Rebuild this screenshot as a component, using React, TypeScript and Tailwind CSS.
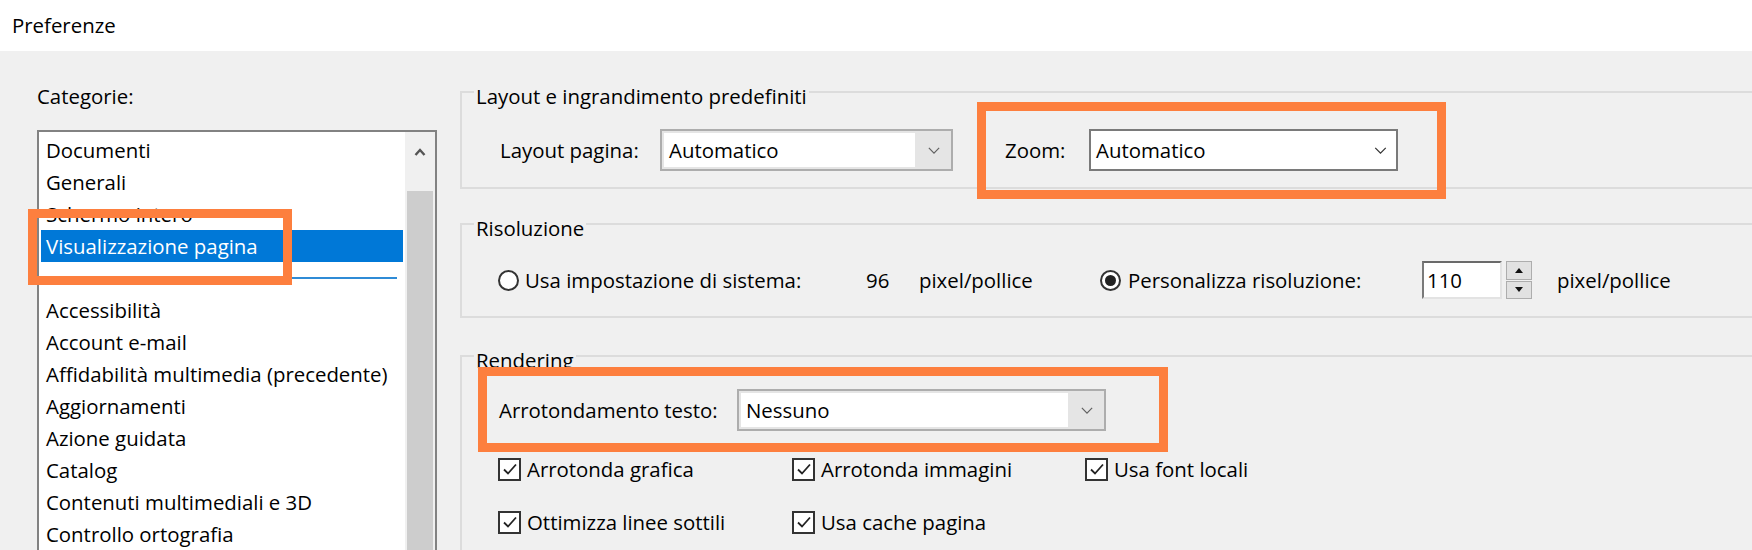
import type { ReactNode } from 'react';

const CATEGORIES_TOP = ['Documenti', 'Generali', 'Schermo intero', 'Visualizzazione pagina'];
const CATEGORIES = [
  'Accessibilità',
  'Account e-mail',
  'Affidabilità multimedia (precedente)',
  'Aggiornamenti',
  'Azione guidata',
  'Catalog',
  'Contenuti multimediali e 3D',
  'Controllo ortografia',
];

function Chevron({ className = '' }: { className?: string }) {
  return (
    <svg viewBox="0 0 14 8" className={className} fill="none" stroke="currentColor" strokeWidth={1.4}>
      <polyline points="1,1 7,7 13,1" />
    </svg>
  );
}

// annotation frame drawn over the screenshot
function Highlight({ className }: { className: string }) {
  return <div className={`pointer-events-none absolute border-[9px] border-[#fd7f3e] ${className}`} />;
}

function ReadonlyCombo({ value, className }: { value: string; className: string }) {
  return (
    <div className={`flex h-[42px] border-2 border-[#adadad] bg-[#e5e5e5] ${className}`}>
      <div className="m-[2px] flex flex-1 items-center bg-white pl-[5px]">{value}</div>
      <div className="flex w-[34px] items-center justify-center text-[#606060]">
        <Chevron className="h-[7px] w-[12px]" />
      </div>
    </div>
  );
}

function Radio({ checked = false }: { checked?: boolean }) {
  return (
    <span className="flex h-[21px] w-[21px] shrink-0 items-center justify-center rounded-full border-2 border-[#333] bg-white">
      {checked && <span className="h-[11px] w-[11px] rounded-full bg-[#222]" />}
    </span>
  );
}

function Checkbox({ label }: { label: string }) {
  return (
    <label className="flex items-center">
      <span className="flex h-[23px] w-[23px] shrink-0 items-center justify-center border-2 border-[#333] bg-white">
        <svg viewBox="0 0 16 16" className="h-[16px] w-[16px]" fill="none" stroke="#222" strokeWidth={1.8}>
          <polyline points="2,8.5 6,12.5 14,3.5" />
        </svg>
      </span>
      <span className="ml-[6px]">{label}</span>
    </label>
  );
}

function Group({ title, children, className = '' }: { title: string; children: ReactNode; className?: string }) {
  return (
    <fieldset className={`w-[1320px] border-2 border-[#dcdcdc] ${className}`}>
      <legend className="ml-[12px] px-[2px] pt-[8px] leading-[24px]">{title}</legend>
      {children}
    </fieldset>
  );
}

export default function App() {
  return (
    <div className="flex h-[550px] w-full flex-col overflow-hidden bg-[#f0f0f0] font-['Open_Sans','Noto_Sans',sans-serif] text-[20.4px] text-black">
      <div className="h-[51px] shrink-0 bg-white pl-[12px] leading-[51px]">Preferenze</div>

      <div className="flex min-h-0 flex-1">
        <div className="w-[460px] shrink-0 pl-[37px] pt-[30px]">
          <div className="leading-[30px]">Categorie:</div>
          <div className="relative mt-[19px] flex h-[440px] w-[400px] border-2 border-[#828282] bg-white">
            <ul className="flex-1 px-[2px] pt-[2px]">
              {CATEGORIES_TOP.map((c, i) => (
                <li
                  key={c}
                  className={`h-[32px] pl-[5px] leading-[32px] ${i === 3 ? 'bg-[#0078d7] text-white' : ''}`}
                >
                  {c}
                </li>
              ))}
              <li className="flex h-[32px] items-center pl-[5px] pr-[6px]">
                <div className="h-[2px] w-full bg-[#2f8bd6]" />
              </li>
              {CATEGORIES.map((c) => (
                <li key={c} className="h-[32px] pl-[5px] leading-[32px]">
                  {c}
                </li>
              ))}
            </ul>
            <div className="flex w-[30px] flex-col bg-[#f0f0f0] pt-[3px]">
              <div className="flex h-[34px] items-center justify-center text-[#555]">
                <svg viewBox="0 0 12 8" className="h-[8px] w-[12px]" fill="none" stroke="currentColor" strokeWidth={2.4}>
                  <polyline points="1.5,7 6,2 10.5,7" />
                </svg>
              </div>
              <div className="h-[22px]" />
              <div className="mx-[2px] flex-1 bg-[#cdcdcd]" />
            </div>
            <Highlight className="-left-[11px] top-[77px] h-[76px] w-[264px]" />
          </div>
        </div>

        <div className="flex-1">
          <Group title="Layout e ingrandimento predefiniti" className="mt-[25px]">
            <div className="flex items-center pb-[16px] pl-[38px] pt-[21px]">
              <span className="w-[160px] shrink-0">Layout pagina:</span>
              <ReadonlyCombo value="Automatico" className="w-[293px]" />
              <div className="relative ml-[52px] flex items-center">
                <span className="w-[84px] shrink-0">Zoom:</span>
                <div className="flex h-[42px] w-[309px] items-center justify-between border-2 border-[#7a7a7a] bg-white pl-[5px] pr-[9px]">
                  <span>Automatico</span>
                  <Chevron className="h-[7px] w-[13px] text-[#333]" />
                </div>
                <Highlight className="-bottom-[28px] -left-[28px] -right-[48px] -top-[27px]" />
              </div>
            </div>
          </Group>

          <Group title="Risoluzione" className="mt-[19px]">
            <div className="mb-[17px] mt-[21px] flex h-[38px] items-center pl-[36px]">
              <Radio />
              <span className="ml-[6px] w-[341px] shrink-0">Usa impostazione di sistema:</span>
              <span className="w-[53px] shrink-0">96</span>
              <span className="w-[181px] shrink-0">pixel/pollice</span>
              <Radio checked />
              <span className="ml-[7px] w-[294px] shrink-0">Personalizza risoluzione:</span>
              <div className="flex h-[38px] w-[80px] items-center border-2 border-b-[#e3e3e3] border-l-[#7a7a7a] border-r-[#e3e3e3] border-t-[#6a6a6a] bg-white pl-[3px]">
                110
              </div>
              <div className="ml-[4px] flex h-[38px] w-[26px] flex-col gap-[1px]">
                <div className="flex flex-1 items-center justify-center border border-[#adadad] bg-[#e1e1e1]">
                  <svg viewBox="0 0 8 5" className="h-[5px] w-[8px]">
                    <polygon points="0,5 4,0 8,5" fill="#111" />
                  </svg>
                </div>
                <div className="flex flex-1 items-center justify-center border border-[#adadad] bg-[#e1e1e1]">
                  <svg viewBox="0 0 8 5" className="h-[5px] w-[8px]">
                    <polygon points="0,0 4,5 8,0" fill="#111" />
                  </svg>
                </div>
              </div>
              <span className="ml-[25px]">pixel/pollice</span>
            </div>
          </Group>

          <Group title="Rendering" className="mt-[22px] h-[300px]">
            <div className="pl-[36px] pt-[17px]">
              <div className="relative flex w-fit items-center pl-[1px]">
                <span className="w-[238px] shrink-0">Arrotondamento testo:</span>
                <ReadonlyCombo value="Nessuno" className="w-[369px]" />
                <Highlight className="-bottom-[21px] -left-[20px] -right-[62px] -top-[22px]" />
              </div>
              <div className="mt-[26px] flex h-[24px] items-center">
                <div className="w-[294px] shrink-0">
                  <Checkbox label="Arrotonda grafica" />
                </div>
                <div className="w-[293px] shrink-0">
                  <Checkbox label="Arrotonda immagini" />
                </div>
                <Checkbox label="Usa font locali" />
              </div>
              <div className="mt-[29px] flex h-[24px] items-center">
                <div className="w-[294px] shrink-0">
                  <Checkbox label="Ottimizza linee sottili" />
                </div>
                <Checkbox label="Usa cache pagina" />
              </div>
            </div>
          </Group>
        </div>
      </div>
    </div>
  );
}
